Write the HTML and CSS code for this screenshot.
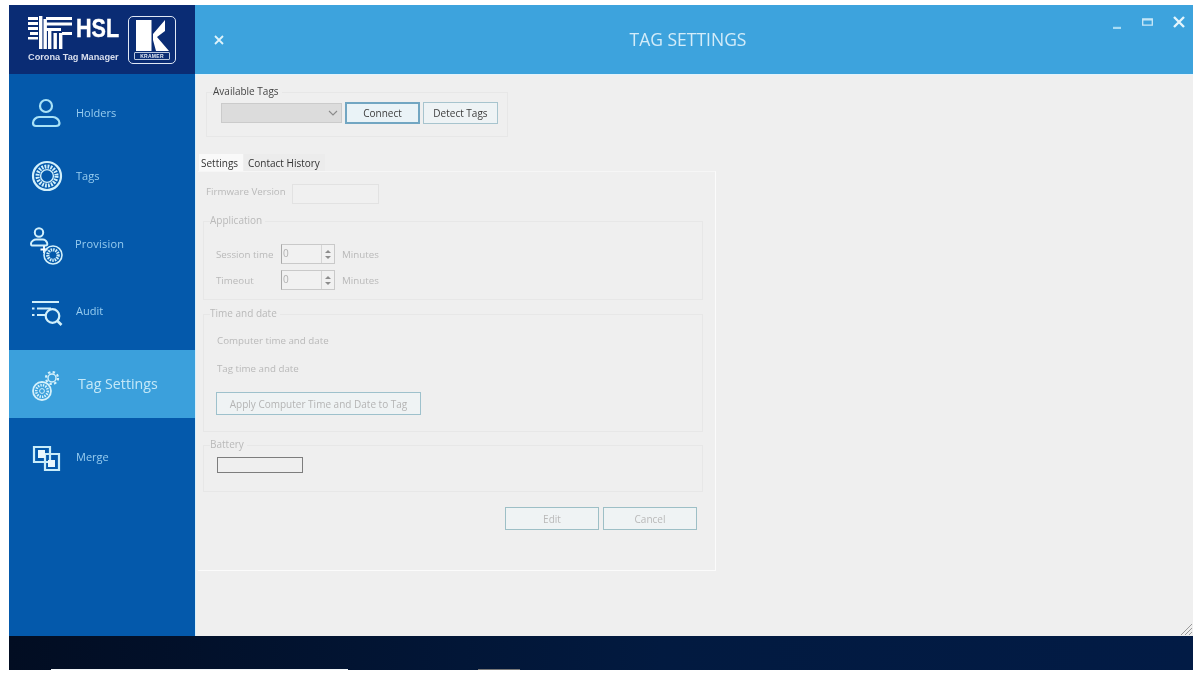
FILE: index.html
```html
<!DOCTYPE html>
<html lang="en">
<head>
<meta charset="utf-8">
<title>Tag Settings</title>
<link rel="stylesheet" href="styles.css">
</head>
<body>
<div class="screen">
  <div class="window">
    <aside class="sidebar">
      <div class="brand">
        <div class="brand-left">
          <div class="brand-top">
            <svg class="faders" viewBox="0 0 44 33" fill="#fff">
              <path d="M0 1h10v3H0zM0 6h10v3H0zM0 11h10v3H0zM2 16h8v3H2zM0 21h10v2.500H0zM11 0h3.400v33H11zM15.500 3h3.400v30h-3.400zM18 1h26v3H18zM18 6.500h26v3H18zM18 12h15v3H18zM20 14h3.400v19H20zM25.500 17h3.400v16h-3.400zM31 17h3.400v16H31zM34 16h10v3H34z"/>
            </svg>
            <span class="hsl">HSL</span>
          </div>
          <div class="corona">Corona Tag Manager</div>
        </div>
        <div class="kramer">
          <svg class="kramer-k" viewBox="0 0 33 31" fill="#fff">
            <path d="M0 0h15.500v31H0zM17 14L29 0v11l-8 6 12 14H20l-3-11z"/>
          </svg>
          <span class="kramer-name">KRAMER</span>
        </div>
      </div>
      <nav class="nav">
        <a class="nav-item">
          <svg class="icon" viewBox="0 0 34 34" fill="none" stroke="#a8e2f7" stroke-width="2.2">
            <circle cx="17" cy="10" r="6"/>
            <path d="M7 30h20c2.500 0 3.500-1 3.500-3 0-3-3.500-6-6.500-6H10c-3 0-6 3-6 6 0 2 .5 3 3 3z"/>
          </svg>
          <span class="nav-label">Holders</span>
        </a>
        <a class="nav-item nav-tags">
          <svg class="icon" viewBox="0 0 34 34" fill="none" stroke="#d2f0fb">
            <circle cx="18" cy="17" r="14" stroke-width="2.200"/>
            <circle cx="18" cy="17" r="9.500" stroke-width="4" stroke-dasharray="1.800 1.200"/>
            <circle cx="18" cy="17" r="6.400" stroke-width="1.400"/>
          </svg>
          <span class="nav-label">Tags</span>
        </a>
        <a class="nav-item nav-provision">
          <svg class="icon" viewBox="0 0 34 34" fill="none" stroke="#d2f0fb">
            <circle cx="10" cy="5.500" r="4.200" stroke-width="2"/>
            <path d="M3 18.500h14c1.500 0 1.500-1.500 1-3-1-2-3-3-4-3H7c-2 0-5 2-5 4 0 1 0 2 1 2z" stroke-width="2"/>
            <path d="M15 19v7M11.500 22.500h7" stroke-width="1.800" stroke="#fff"/>
            <circle cx="24" cy="28" r="9" stroke-width="1.600"/>
            <circle cx="24" cy="28" r="5.200" stroke-width="3.200" stroke-dasharray="1.500 .9"/>
          </svg>
          <span class="nav-label nav-label-provision">Provision</span>
        </a>
        <a class="nav-item nav-audit">
          <svg class="icon" viewBox="0 0 34 34" fill="none" stroke="#d2f0fb" stroke-width="2.200">
            <path d="M3 8h27M3 14.500h2.500M8 14.500h14M3 21h2.500M8 21h8"/>
            <circle cx="23.500" cy="22" r="6.800"/>
            <path d="M28.500 27l4 4" stroke-width="2.600"/>
          </svg>
          <span class="nav-label">Audit</span>
        </a>
        <a class="nav-item nav-active">
          <svg class="icon" viewBox="0 0 34 34" fill="none" stroke="#d5f1fb">
            <circle cx="13" cy="24" r="9" stroke-width="1.800"/>
            <circle cx="13" cy="24" r="5.800" stroke-width="2.600" stroke-dasharray="1.400 1.100"/>
            <circle cx="13" cy="24" r="2.400" stroke-width="1"/>
            <circle cx="23" cy="11" r="4" stroke-width="1.400"/>
            <circle cx="23" cy="11" r="6" stroke-width="2.200" stroke-dasharray="2.400 2.300"/>
          </svg>
          <span class="nav-label nav-label-active">Tag Settings</span>
        </a>
        <a class="nav-item nav-merge">
          <svg class="icon" viewBox="0 0 34 34" fill="none" stroke="#c9edfa" stroke-width="2.200">
            <path d="M5 7h16v15H5z"/>
            <path d="M16 14h14v16H16z"/>
            <path d="M9 10h7v8H9zM19 20h7v7h-7z" fill="#eaf8fd" stroke="none"/>
          </svg>
          <span class="nav-label">Merge</span>
        </a>
      </nav>
    </aside>
    <main class="main">
      <header class="header">
        <div class="header-left">
          <svg class="close-panel" viewBox="0 0 10 10" stroke="#dff3fb" stroke-width="1.800"><path d="M1 1l8 8M9 1l-8 8"/></svg>
        </div>
        <h1 class="title">TAG SETTINGS</h1>
        <div class="controls">
          <svg class="ctl ctl-min" viewBox="0 0 8 10" stroke="#a9dcf4" stroke-width="2.400"><path d="M0 9h8"/></svg>
          <svg class="ctl ctl-max" viewBox="0 0 11 8" fill="none" stroke="#cbe9f8" stroke-width="1.300"><path d="M.7.8h9.600v6.400H.7z"/><path d="M.7 1.800h9.600" stroke-width="1.400"/></svg>
          <svg class="ctl ctl-close" viewBox="0 0 12 12" stroke="#e4f5fc" stroke-width="2.400"><path d="M1 1l10 10M11 1L1 11"/></svg>
        </div>
      </header>
      <div class="content">
        <section class="group available">
          <span class="legend legend-dark">Available Tags</span>
          <div class="select"><svg class="chevron" viewBox="0 0 10 6" fill="none" stroke="#8a8a8a" stroke-width="1.100"><path d="M1 1l4 4 4-4"/></svg></div>
          <button class="btn btn-primary">Connect</button>
          <button class="btn btn-detect">Detect Tags</button>
        </section>
        <div class="tabs">
          <span class="tab tab-on">Settings</span>
          <span class="tab tab-off">Contact History</span>
        </div>
        <section class="panel">
          <div class="row row-firmware">
            <span class="muted firmware-label">Firmware Version</span>
            <span class="field firmware-field"></span>
          </div>
          <div class="group app">
            <span class="legend">Application</span>
            <div class="row row-time">
              <span class="muted time-label">Session time</span>
              <span class="spin"><span class="spin-val">0</span><span class="spin-arrows"><i class="up"></i><i class="down"></i></span></span>
              <span class="muted">Minutes</span>
            </div>
            <div class="row row-time row-timeout">
              <span class="muted time-label">Timeout</span>
              <span class="spin"><span class="spin-val">0</span><span class="spin-arrows"><i class="up"></i><i class="down"></i></span></span>
              <span class="muted">Minutes</span>
            </div>
          </div>
          <div class="group datetime">
            <span class="legend">Time and date</span>
            <p class="muted line-one">Computer time and date</p>
            <p class="muted line-two">Tag time and date</p>
            <button class="btn btn-apply">Apply Computer Time and Date to Tag</button>
          </div>
          <div class="group battery">
            <span class="legend">Battery</span>
            <div class="battery-bar"></div>
          </div>
          <div class="actions">
            <button class="btn btn-action">Edit</button>
            <button class="btn btn-action">Cancel</button>
          </div>
        </section>
        <svg class="grip" viewBox="0 0 12 12" stroke="#9a9a9a" stroke-width="1"><path d="M1 12L12 1M5 12l7-7M9 12l3-3"/></svg>
      </div>
    </main>
  </div>
  <footer class="taskbar">
    <span class="task-search"></span>
    <span class="task-app"></span>
  </footer>
</div>
</body>
</html>
```
FILE: styles.css
```css
* { box-sizing: border-box; }
html, body { margin: 0; height: 100%; background: #fff; overflow: hidden; }
body { font-family: "Open Sans", "Noto Sans", sans-serif; font-size: 10px; color: #3c3c3c; }

.screen {
  width: 1184px;
  height: 665px;
  margin: 5px 3px 0 9px;
  display: flex;
  flex-direction: column;
  filter: blur(0.5px);
}
.window { flex: 0 0 631px; display: flex; }

/* sidebar */
.sidebar { flex: 0 0 186px; background: #0459ab; display: flex; flex-direction: column; }
.brand {
  flex: 0 0 69px;
  background: #0a2c74;
  padding: 11px 0 0 19px;
  display: flex;
  gap: 8px;
}
.brand-left { width: 92px; }
.brand-top { display: flex; align-items: flex-start; height: 33px; }
.faders { width: 44px; height: 33px; flex: none; }
.hsl {
  font-family: "Liberation Sans", Arial, sans-serif;
  font-weight: 700;
  font-size: 26px;
  line-height: 24px;
  color: #fff;
  margin-left: 4px;
  transform: scaleX(.83);
  transform-origin: left top;
  -webkit-text-stroke: .4px #fff;
}
.corona { font-family: "Liberation Sans", Arial, sans-serif; font-weight: 700; font-size: 9.2px; line-height: 14px; color: #d9dfee; margin-top: 1px; white-space: nowrap; }
.kramer {
  width: 48px;
  height: 48px;
  border: 1.5px solid #dfe8f5;
  border-radius: 5px;
  padding: 3px 3px 0;
  display: flex;
  flex-direction: column;
  align-items: center;
}
.kramer-k { width: 33px; height: 31px; flex: none; }
.kramer-name { width: 36px; margin-top: 1px; border: 1px solid #b8c6de; border-radius: 1px; text-align: center; font-family: "Liberation Sans", Arial, sans-serif; font-size: 5px; font-weight: 700; line-height: 6px; color: #e6ecf6; letter-spacing: .3px; }

.nav { display: flex; flex-direction: column; padding-top: 9px; }
.nav-item { height: 60px; display: flex; align-items: center; padding-left: 20px; gap: 13px; }
.icon { width: 34px; height: 34px; flex: none; overflow: visible; }
.nav-tags { margin-top: 3px; }
.nav-provision { margin-top: 8px; }
.nav-audit { margin-top: 7px; }
.nav-active { margin-top: 9px; height: 68px; background: #3ba0dc; gap: 15px; }
.nav-merge { margin-top: 9px; }
.nav-label { font-size: 11px; color: #98cdf0; padding-bottom: 2px; }
.nav-label-provision { margin-left: -1px; letter-spacing: .2px; }
.nav-label-active { font-size: 14.200px; color: #c4e8f8; }

/* main */
.main { flex: 1; display: flex; flex-direction: column; background: #efefef; min-width: 0; }
.header { flex: 0 0 69px; background: #3da3dd; display: flex; align-items: flex-start; }
.header-left { flex: 0 0 70px; padding: 30px 0 0 19px; }
.close-panel { display: block; width: 10px; height: 10px; }
.title { flex: 1; margin: 0; padding-top: 23px; text-align: center; font-size: 17.500px; line-height: 22px; font-weight: 400; color: #d3ecf9; }
.controls { flex: 0 0 82px; display: flex; align-items: flex-start; padding: 12px 0 0 2px; }
.ctl { display: block; flex: none; }
.ctl-min { width: 8px; height: 10px; margin-top: 2px; }
.ctl-max { width: 11px; height: 8px; margin: 1px 0 0 21px; }
.ctl-close { width: 12px; height: 12px; margin: -1px 0 0 20px; }

.content {
  flex: 1;
  position: relative;
  padding: 17px 0 0 0;
  border-left: 1px solid #d6effb;
  border-top: 1px solid #e2f3fc;
}
.group { position: relative; border: 1px solid #e7e7e7; }
.legend {
  position: absolute;
  top: -9px;
  left: 6px;
  padding-right: 3px;
  background: #efefef;
  line-height: 15px;
  color: #b9b9b9;
  white-space: nowrap;
}
.legend-dark { color: #444; }

.available {
  width: 302px;
  height: 45px;
  margin-left: 10px;
  padding: 10px 0 0 14px;
  display: flex;
  align-items: flex-start;
}
.select {
  width: 121px;
  height: 20px;
  background: #dcdcdc;
  border: 1px solid #cbcbcb;
  display: flex;
  align-items: center;
  justify-content: flex-end;
  padding-right: 3px;
}
.chevron { width: 10px; height: 6px; }

.btn { font-family: inherit; font-size: 10px; color: #3c3c3c; padding: 0; background: #eef3f5; border: 1px solid #a7c4ce; }
.btn-primary { width: 75px; height: 22px; margin: -1px 0 0 3px; border: 2px solid #72a6c2; background: #eaf3f7; }
.btn-detect { width: 75px; height: 22px; margin: -1px 0 0 3px; }

.tabs { display: flex; margin: 17px 0 0 3px; height: 17px; }
.tab { line-height: 19px; padding: 0 2px; color: #333; white-space: nowrap; }
.tab-on { background: #f9f9f9; width: 44px; }
.tab-off { background: #ececec; margin-left: 1px; width: 81px; padding-left: 4px; }

.panel {
  width: 518px;
  height: 400px;
  margin-left: 2px;
  padding: 12px 0 0 5px;
  border-right: 1px solid #fbfbfb;
  border-bottom: 1px solid #fbfbfb;
  border-top: 1px solid #f6f6f6;
}
.muted { color: #b9b9b9; white-space: nowrap; font-size: 9.750px; }
.row { display: flex; align-items: center; }
.row-firmware { height: 20px; padding-left: 3px; }
.firmware-label { width: 86px; padding-bottom: 6px; }
.field { display: block; background: #f0f0f0; border: 1px solid #e2e2e2; }
.firmware-field { width: 87px; height: 20px; }

.app { width: 500px; height: 79px; margin-top: 17px; padding: 22px 0 0 12px; }
.row-time { height: 20px; }
.row-timeout { margin-top: 6px; }
.time-label { width: 65px; }
.spin { display: flex; width: 54px; height: 20px; margin-right: 7px; border: 1px solid #c9c9c9; border-left-color: #a9a9a9; background: #f1f1f1; }
.spin-val { flex: 1; padding-left: 1px; line-height: 16px; color: #b0b0b0; }
.spin-arrows { width: 13px; border-left: 1px solid #d5d5d5; display: flex; flex-direction: column; align-items: center; justify-content: center; gap: 3px; }
.up { border: 3px solid transparent; border-top: 0; border-bottom: 3px solid #8d8d8d; }
.down { border: 3px solid transparent; border-bottom: 0; border-top: 3px solid #8d8d8d; }

.datetime { width: 500px; height: 118px; margin-top: 14px; padding-left: 13px; }
.line-one { margin: 18px 0 0; line-height: 15px; }
.line-two { margin: 13px 0 0; line-height: 15px; }
.btn-apply { display: block; width: 205px; height: 23px; margin: 16px 0 0 -1px; color: #b4b4b4; border-color: #9ec1cc; background: #eff3f4; }

.battery { width: 500px; height: 47px; margin-top: 13px; padding: 11px 0 0 13px; }
.battery-bar { width: 86px; height: 16px; border: 1px solid #7d7d7d; }

.actions { display: flex; justify-content: flex-end; gap: 4px; width: 494px; margin-top: 15px; }
.btn-action { width: 94px; height: 23px; color: #b9b9b9; border-color: #9dbfc6; background: #eff3f4; }

.grip { position: absolute; right: 1px; bottom: 1px; width: 12px; height: 12px; }

/* taskbar */
.taskbar {
  flex: 1;
  position: relative;
  background: linear-gradient(90deg, #020d22 0%, #021a40 55%, #021b45 100%);
}
.task-search { position: absolute; left: 42px; bottom: 0; width: 297px; height: 1px; background: #f2f6f9; }
.task-app { position: absolute; left: 469px; bottom: 0; width: 42px; height: 1px; background: #777; }
```
